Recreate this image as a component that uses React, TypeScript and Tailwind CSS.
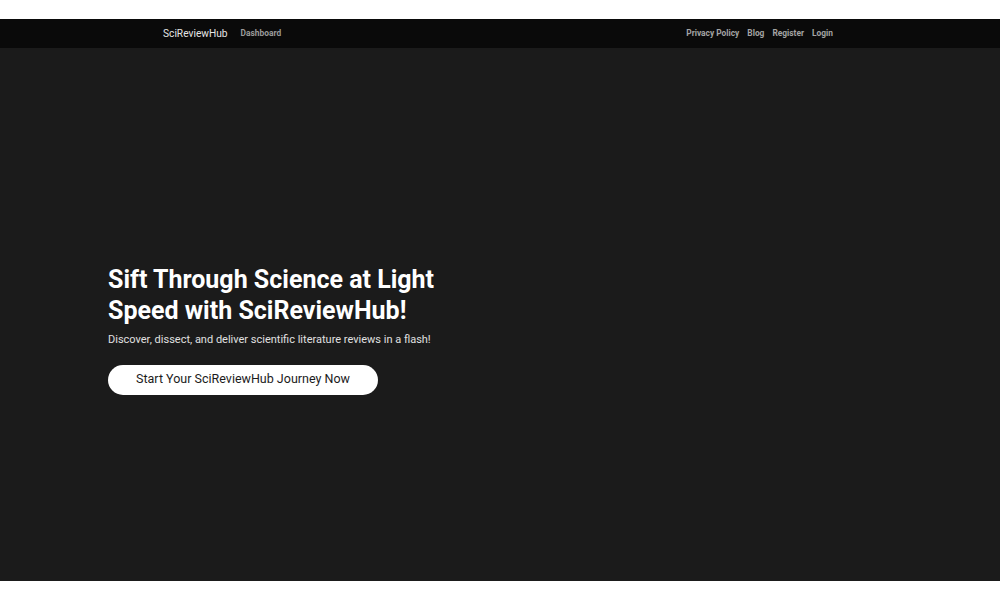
export default function App() {
    return (
        <div className="min-h-[600px] bg-white font-['Roboto',sans-serif]">
            <div className="h-[19px]" />

            {/* Nav */}
            <nav className="h-[29px] bg-[#0a0a0a] flex items-center">
                <div className="w-[700px] mx-auto flex items-center justify-between pl-[13px] pr-[17px]">
                    <div className="flex items-center gap-[13px]">
                        <span className="text-[10.2px] text-[#e5e5e5]">SciReviewHub</span>
                        <span className="text-[8.4px] font-bold text-[#9a9a9a]">Dashboard</span>
                    </div>
                    <div className="flex items-center gap-[8px] text-[8.4px] font-bold text-[#a3a3a3]">
                        <span>Privacy Policy</span>
                        <span>Blog</span>
                        <span>Register</span>
                        <span>Login</span>
                    </div>
                </div>
            </nav>

            {/* Hero */}
            <section className="h-[533px] bg-[#1b1b1b] flex items-center">
                <div className="pl-[108px] pt-[30px]">
                    <h1 className="text-[25px] leading-[31px] font-bold text-white w-[360px]">
                        Sift Through Science at Light Speed with SciReviewHub!
                    </h1>
                    <p className="mt-[6px] text-[11px] text-[#e0e0e0]">
                        Discover, dissect, and deliver scientific literature reviews in a flash!
                    </p>
                    <button className="mt-[16px] h-[30px] w-[270px] rounded-full bg-white text-[12.5px] text-[#1b1b1b]">
                        Start Your SciReviewHub Journey Now
                    </button>
                </div>
            </section>
        </div>
    );
}
